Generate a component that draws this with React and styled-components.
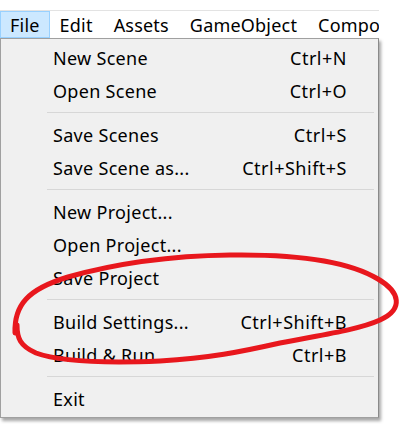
import React from "react";
import styled, { createGlobalStyle } from "styled-components";

const Global = createGlobalStyle`
  html, body { margin: 0; padding: 0; background: #ffffff; }
  body { font-family: "Noto Sans", "Open Sans", sans-serif; overflow: hidden; }
`;

const Page = styled.div`
  width: 404px;
  height: 424px;
  position: relative;
  background: #ffffff;
  overflow: hidden;
`;

const TitleStrip = styled.div`
  height: 10px;
  overflow: hidden;
  display: flex;
  align-items: flex-start;
`;

const TitleText = styled.div`
  display: flex;
  margin-top: -21px;
  font-size: 18px;
  line-height: 20px;
  color: #111;
  white-space: nowrap;
`;

const TitleIcon = styled.span`
  margin-left: 13px;
  width: 9px;
  display: inline-block;
`;

const TitleWord = styled.span`
  margin-left: ${(p) => p.$gap}px;
`;

const MenuBar = styled.div`
  width: 379px;
  height: 27px;
  border-top: 1px solid #e3e3e3;
  background: #ffffff;
  display: flex;
  overflow: hidden;
  font-size: 18px;
  letter-spacing: 0.2px;
  color: #000;
`;

const MenuItem = styled.div`
  box-sizing: border-box;
  height: 27px;
  padding: 0 ${(p) => (p.$active ? 9 : 10)}px;
  display: flex;
  align-items: center;
  white-space: nowrap;
  background: ${(p) => (p.$active ? "#cce8ff" : "transparent")};
  border: 1px solid ${(p) => (p.$active ? "#99d1ff" : "transparent")};
  margin-left: ${(p) => (p.$active ? "0" : "-1px")};
`;

const Dropdown = styled.div`
  box-sizing: border-box;
  width: 379px;
  background: #f0f0f0;
  border: 1px solid #a0a0a0;
  border-right-color: #8a8a8a;
  box-shadow: 2px 3px 3px rgba(0, 0, 0, 0.35);
  padding: 2px 0 2px 0;
  font-size: 18px;
  letter-spacing: 0.3px;
  color: #000;
`;

const Row = styled.div`
  height: 33px;
  display: flex;
  align-items: center;
  justify-content: space-between;
  padding: 0 31px 0 52px;
  white-space: nowrap;
`;

const Shortcut = styled.span`
  letter-spacing: 0.5px;
`;

const Separator = styled.div`
  height: 11px;
  display: flex;
  align-items: center;
  padding: 0 4px 0 46px;
  &::after {
    content: "";
    flex: 1;
    height: 1px;
    background: #d7d7d7;
  }
`;

const Annotation = styled.svg`
  position: absolute;
  left: 0;
  top: 0;
  pointer-events: none;
`;

const sections = [
  [
    ["New Scene", "Ctrl+N"],
    ["Open Scene", "Ctrl+O"],
  ],
  [
    ["Save Scenes", "Ctrl+S"],
    ["Save Scene as...", "Ctrl+Shift+S"],
  ],
  [
    ["New Project...", ""],
    ["Open Project...", ""],
    ["Save Project", ""],
  ],
  [
    ["Build Settings...", "Ctrl+Shift+B"],
    ["Build & Run", "Ctrl+B"],
  ],
  [["Exit", ""]],
];

export default function App() {
  return (
    <Page>
      <Global />
      <TitleStrip>
        <TitleText>
          <TitleIcon>◄</TitleIcon>
          <TitleWord $gap={134}>Unity 2018</TitleWord>
          <TitleWord $gap={0}>(DX11)</TitleWord>
        </TitleText>
      </TitleStrip>
      <MenuBar>
        <MenuItem $active>File</MenuItem>
        <MenuItem>Edit</MenuItem>
        <MenuItem>Assets</MenuItem>
        <MenuItem>GameObject</MenuItem>
        <MenuItem>Component</MenuItem>
      </MenuBar>
      <Dropdown>
        {sections.map((sec, i) => (
          <React.Fragment key={i}>
            {i > 0 && <Separator />}
            {sec.map(([label, key]) => (
              <Row key={label}>
                <span>{label}</span>
                <Shortcut>{key}</Shortcut>
              </Row>
            ))}
          </React.Fragment>
        ))}
      </Dropdown>
      <Annotation width="404" height="424" viewBox="0 0 404 424">
        <path
          d="M15 333 C14 305 28 289 68 277 C110 265 160 256 230 255 C300 254 350 262 378 279 C400 292 404 309 380 320 C358 330 320 335 280 343 C240 352 210 358 160 361 C110 363 60 362 36 353 C20 346 17 338 17 325"
          fill="none"
          stroke="#e8171d"
          strokeWidth="5"
          strokeLinecap="round"
          strokeLinejoin="round"
        />
      </Annotation>
    </Page>
  );
}
